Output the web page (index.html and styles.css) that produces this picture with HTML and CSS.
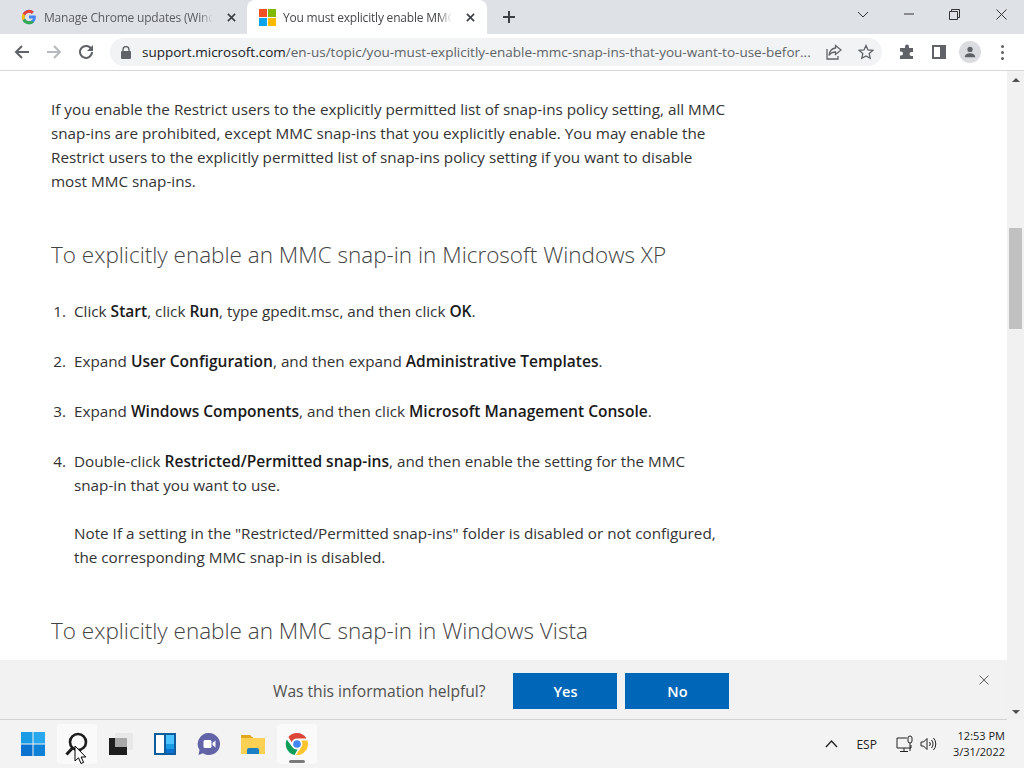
FILE: index.html
```html
<!DOCTYPE html>
<html lang="en">
<head>
  <meta charset="UTF-8">
  <title>You must explicitly enable MMC snap-ins</title>
  <link rel="stylesheet" href="styles.css">
</head>
<body>
  <div class="tabstrip">
    <div class="tab">
      <svg class="favicon" viewBox="0 0 16 16">
        <path d="M14.6 6.6H8v2.8h3.9c-.4 1.8-2 2.9-3.9 2.9a4.3 4.3 0 0 1 0-8.6c1 0 2 .4 2.8 1l2-2A7.2 7.2 0 0 0 8 .8a7.2 7.2 0 1 0 0 14.4c3.7 0 6.8-2.6 6.8-7.2 0-.5 0-.9-.2-1.4z" fill="#4285f4"/>
        <path d="M1.7 4.6 4 6.4A4.3 4.3 0 0 1 8 3.7c1 0 2 .4 2.8 1l2-2A7.2 7.2 0 0 0 1.7 4.6z" fill="#ea4335"/>
        <path d="M1.7 11.4A7.2 7.2 0 0 0 8 15.2c1.9 0 3.5-.6 4.8-1.8l-2.3-1.8c-.7.5-1.5.7-2.5.7a4.3 4.3 0 0 1-4-2.8z" fill="#34a853"/>
        <path d="M1.7 4.6a7.2 7.2 0 0 0 0 6.8L4 9.5a4.3 4.3 0 0 1 0-3.1z" fill="#fbbc05"/>
      </svg>
      <span class="tab-title">Manage Chrome updates (Windows)</span>
      <svg class="tab-close" viewBox="0 0 10 10"><path d="M1 1l8 8M9 1l-8 8"/></svg>
    </div>
    <div class="tab tab-active">
      <svg class="favicon favicon-ms" viewBox="0 0 17 17">
        <rect width="8" height="8" fill="#f25022"/>
        <rect x="9" width="8" height="8" fill="#7fba00"/>
        <rect y="9" width="8" height="8" fill="#00a4ef"/>
        <rect x="9" y="9" width="8" height="8" fill="#ffb900"/>
      </svg>
      <span class="tab-title">You must explicitly enable MMC snap-ins</span>
      <svg class="tab-close" viewBox="0 0 10 10"><path d="M1 1l8 8M9 1l-8 8"/></svg>
    </div>
    <svg class="new-tab" viewBox="0 0 12 12"><path d="M6 0v12M0 6h12"/></svg>
    <div class="window-controls">
      <svg class="win-btn win-chevron" viewBox="0 0 12 7"><path d="M1 1l5 5 5-5"/></svg>
      <svg class="win-btn win-min" viewBox="0 0 10 2"><path d="M0 1h10"/></svg>
      <svg class="win-btn win-max" viewBox="0 0 11 11"><path d="M.5 2.500h8v8h-8zM2.500 2.500v-2h8v8h-2"/></svg>
      <svg class="win-btn win-close" viewBox="0 0 11 11"><path d="M.5.5l10 10M10.500.5l-10 10"/></svg>
    </div>
  </div>

  <div class="toolbar">
    <svg class="tool" viewBox="0 0 16 16"><path d="M15 8H2M8 2 2 8l6 6"/></svg>
    <svg class="tool tool-off" viewBox="0 0 16 16"><path d="M1 8h13M8 2l6 6-6 6"/></svg>
    <svg class="tool" viewBox="0 0 16 16"><path d="M13.500 5.500A6 6 0 1 0 14 8"/><path class="solid" d="M15 1v6H9z"/></svg>
    <div class="omnibox">
      <svg class="lock" viewBox="0 0 10 13"><path d="M2 5.500V3.500a3 3 0 0 1 6 0v2" fill="none" stroke="#5f6368" stroke-width="1.400"/><rect y="5" width="10" height="8" rx="1" fill="#5f6368"/></svg>
      <span class="url"><span class="url-host">support.microsoft.com</span>/en-us/topic/you-must-explicitly-enable-mmc-snap-ins-that-you-want-to-use-befor...</span>
      <svg class="omni-icon omni-share" viewBox="0 0 16 16"><path d="M9.500 1.500 15 6l-5.500 4.500V8C6 8 4.500 9 3 11.500 3.500 7 6 4.500 9.500 4zM1 5v10h11v-3"/></svg>
      <svg class="omni-icon" viewBox="0 0 16 16"><path d="M8 1.500l2 4.400 4.800.5-3.600 3.200 1 4.700L8 11.900l-4.200 2.400 1-4.700L1.200 6.400 6 5.900z"/></svg>
    </div>
    <svg class="ext" viewBox="0 0 16 16"><path d="M6 2.500a2 2 0 0 1 4 0V4h4v4h-1.500a2 2 0 0 0 0 4H14v3H1v-3.500h1a2 2 0 0 0 0-4H1V4h5z" fill="#5f6368"/></svg>
    <svg class="ext panel" viewBox="0 0 14 14"><rect x="1" y="1" width="12" height="12" fill="none" stroke="#5f6368" stroke-width="2"/><rect x="8" y="1" width="5" height="12" fill="#5f6368"/></svg>
    <div class="avatar">
      <svg viewBox="0 0 16 16"><circle cx="8" cy="5" r="3" fill="#5f6368"/><path d="M2 14c0-3 3-4.500 6-4.500s6 1.500 6 4.500z" fill="#5f6368"/></svg>
    </div>
    <div class="kebab"><i></i><i></i><i></i></div>
  </div>

  <div class="viewport">
    <div class="page">
      <div class="article">
        <p>If you enable the Restrict users to the explicitly permitted list of snap-ins policy setting, all MMC snap-ins are prohibited, except MMC snap-ins that you explicitly enable. You may enable the Restrict users to the explicitly permitted list of snap-ins policy setting if you want to disable most MMC snap-ins.</p>
        <h2>To explicitly enable an MMC snap-in in Microsoft Windows XP</h2>
        <ol>
          <li>Click <b>Start</b>, click <b>Run</b>, type gpedit.msc, and then click <b>OK</b>.</li>
          <li>Expand <b>User Configuration</b>, and then expand <b>Administrative Templates</b>.</li>
          <li>Expand <b>Windows Components</b>, and then click <b>Microsoft Management Console</b>.</li>
          <li>Double-click <b>Restricted/Permitted snap-ins</b>, and then enable the setting for the MMC <span class="nowrap">snap-in</span> that you want to use.
            <p class="note">Note If a setting in the "Restricted/Permitted snap-ins" folder is disabled or not configured, the corresponding MMC snap-in is disabled.</p>
          </li>
        </ol>
        <h2>To explicitly enable an MMC snap-in in Windows Vista</h2>
      </div>
      <div class="feedback">
        <span class="feedback-label">Was this information helpful?</span>
        <button>Yes</button>
        <button>No</button>
        <svg class="feedback-close" viewBox="0 0 10 10"><path d="M.5.5l9 9M9.500.5l-9 9"/></svg>
      </div>
    </div>
    <div class="scrollbar">
      <span class="arrow arrow-up"></span>
      <div class="track"><div class="thumb"></div></div>
      <span class="arrow arrow-down"></span>
    </div>
  </div>

  <div class="taskbar">
    <div class="task-icons">
      <div class="task">
        <svg viewBox="0 0 24 24"><rect width="11.500" height="11.500" fill="#1a9be6"/><rect x="12.500" width="11.500" height="11.500" fill="#2aa8ee"/><rect y="12.500" width="11.500" height="11.500" fill="#0a73cf"/><rect x="12.500" y="12.500" width="11.500" height="11.500" fill="#0f82d8"/></svg>
      </div>
      <div class="task task-hover">
        <svg viewBox="0 0 24 24"><circle cx="13" cy="10" r="8" fill="none" stroke="#1c1c1c" stroke-width="2.600"/><path d="M7.500 16 1.500 22.500" stroke="#1c1c1c" stroke-width="3"/></svg>
      </div>
      <div class="task">
        <svg viewBox="0 0 24 24"><rect x="6" y="1" width="18" height="17" fill="#e8e8e8"/><rect y="6" width="18" height="17" fill="#1e1e1e"/><rect x="6" y="6" width="12" height="9" fill="#a8a8a8"/></svg>
      </div>
      <div class="task">
        <svg viewBox="0 0 24 24"><rect x="1" y="1" width="22" height="22" fill="#0f5c9e"/><rect x="3" y="3" width="8" height="18" fill="#fff"/><rect x="13" y="3" width="8" height="9" fill="#4cc2ff"/><rect x="13" y="12" width="8" height="5" fill="#1a9be6"/><rect x="13" y="17" width="8" height="4" fill="#0a73cf"/></svg>
      </div>
      <div class="task">
        <svg viewBox="0 0 24 24"><path d="M12 1a11 11 0 1 1-6 20.200L1.500 23l1-5A11 11 0 0 1 12 1z" fill="#6264a7"/><rect x="6.500" y="8" width="8" height="8" rx="1.500" fill="#fff"/><path d="M15.500 11l3-2.500v7l-3-2.500z" fill="#fff"/></svg>
      </div>
      <div class="task">
        <svg viewBox="0 0 24 24"><path d="M0 3h9l2 2h1v4H0z" fill="#e0a81c"/><rect y="6" width="24" height="16" fill="#fcd053"/><path d="M6 22v-4a2 2 0 0 1 2-2h8a2 2 0 0 1 2 2v4z" fill="#1b7fc4"/></svg>
      </div>
      <div class="task task-open">
        <svg viewBox="0 0 24 24">
          <path d="M12 1a11 11 0 0 1 9.500 5.500H12a5.500 5.500 0 0 0-5.200 3.700L3.400 5A11 11 0 0 1 12 1z" fill="#db4437"/>
          <path d="M1.800 7.500 7.200 15a5.500 5.500 0 0 0 5.400 2.500L9.500 23A11 11 0 0 1 1.800 7.500z" fill="#0f9d58"/>
          <path d="M22.400 8.500A11 11 0 0 1 11 23l4.700-7a5.500 5.500 0 0 0 .4-7.500z" fill="#fdc42d"/>
          <circle cx="12" cy="12" r="4.800" fill="#fff"/><circle cx="12" cy="12" r="3.800" fill="#4285f4"/>
        </svg>
        <span class="open-mark"></span>
      </div>
    </div>
    <svg class="cursor" viewBox="0 0 13 20"><path d="M1 1v15l3.500-3.200L7 18.500l2.600-1.100-2.500-5.400h4.700z" fill="#fff" stroke="#000" stroke-width="1"/></svg>
    <div class="tray">
      <svg class="tray-chevron" viewBox="0 0 13 8"><path d="M1 7l5.500-6L12 7"/></svg>
      <span class="tray-lang">ESP</span>
      <svg class="tray-net" viewBox="0 0 18 18"><path d="M11 3H1v10h14v-3M8 13v3M4 16.500h8"/><rect x="12" y="1" width="4" height="7" rx="2"/><path d="M14 8v8"/></svg>
      <svg class="tray-vol" viewBox="0 0 17 14"><path d="M1 5h2.500L7 1.500v11L3.500 9H1zM9.500 5a3 3 0 0 1 0 4M11.500 3a6 6 0 0 1 0 8M13.500 1a9 9 0 0 1 0 12"/></svg>
      <div class="clock"><span>12:53 PM</span><span>3/31/2022</span></div>
    </div>
  </div>
</body>
</html>
```

FILE: styles.css
```css
/* General */
html, body {
  height: 100%;
}

body {
  margin: 0;
  width: 1024px;
  height: 768px;
  overflow: hidden;
  display: flex;
  flex-direction: column;
  background: #fff;
  font-family: "Open Sans", sans-serif;
}

svg {
  display: block;
  flex: none;
}

/* Tab strip */
.tabstrip {
  height: 34px;
  flex: none;
  display: flex;
  align-items: flex-end;
  background: #dee1e6;
  padding-left: 8px;
}

.tab {
  width: 240px;
  height: 34px;
  box-sizing: border-box;
  display: flex;
  align-items: center;
  padding: 0 8px 0 13px;
  font-size: 12px;
  letter-spacing: -0.2px;
  color: #5a5c60;
}

.tab-active {
  margin-left: -1px;
  padding-left: 12px;
  background: #fff;
  border-radius: 8px 8px 0 0;
  color: #45474a;
}

.favicon {
  width: 16px;
  height: 16px;
  margin-right: 7px;
}

.favicon-ms {
  width: 17px;
  height: 17px;
}

.tab-title {
  flex: 1;
  min-width: 0;
  white-space: nowrap;
  overflow: hidden;
  -webkit-mask-image: linear-gradient(to right, #000 calc(100% - 14px), transparent);
  mask-image: linear-gradient(to right, #000 calc(100% - 14px), transparent);
}

.tab-close {
  width: 9px;
  height: 9px;
  margin: 0 4px 0 14px;
  fill: none;
  stroke: #3c4043;
  stroke-width: 1.800;
}

.new-tab {
  width: 12px;
  height: 12px;
  margin: 0 0 11px 16px;
  fill: none;
  stroke: #3c4043;
  stroke-width: 2;
}

.window-controls {
  margin-left: auto;
  height: 28px;
  align-self: flex-start;
  display: flex;
  align-items: center;
  padding-right: 17px;
}

.win-btn {
  fill: none;
  stroke: #333;
  stroke-width: 1;
}

.win-chevron {
  width: 12px;
  height: 7px;
  margin-right: 35px;
}

.win-min {
  width: 10px;
  height: 2px;
  margin-right: 35px;
}

.win-max {
  width: 11px;
  height: 11px;
  margin-right: 36px;
}

.win-close {
  width: 11px;
  height: 11px;
}

/* Toolbar */
.toolbar {
  height: 37px;
  flex: none;
  box-sizing: border-box;
  display: flex;
  align-items: center;
  padding: 0 0 0 14px;
  background: #fff;
  border-bottom: 1px solid #d5d7da;
}

.tool {
  width: 16px;
  height: 16px;
  margin-right: 16px;
  fill: none;
  stroke: #5f6368;
  stroke-width: 2;
}

.tool-off {
  stroke: #b6b9bd;
}

.tool .solid {
  fill: #5f6368;
  stroke: none;
}

.omnibox {
  width: 772px;
  height: 28px;
  box-sizing: border-box;
  display: flex;
  align-items: center;
  padding: 0 8px 0 11px;
  border-radius: 14px;
  background: #f1f3f4;
}

.lock {
  width: 10px;
  height: 13px;
  margin-right: 11px;
}

.url {
  flex: 1;
  min-width: 0;
  white-space: nowrap;
  overflow: hidden;
  font-size: 13.500px;
  color: #5f6368;
}

.url-host {
  color: #202124;
}

.omni-icon {
  width: 16px;
  height: 16px;
  margin-left: 16px;
  fill: none;
  stroke: #5f6368;
  stroke-width: 1.300;
}

.omni-share {
  margin-left: 15px;
}

.ext {
  width: 16px;
  height: 16px;
  margin-left: 17px;
}

.panel {
  width: 14px;
  height: 14px;
  margin-left: 17px;
}

.avatar {
  width: 22px;
  height: 22px;
  margin-left: 13px;
  display: flex;
  align-items: center;
  justify-content: center;
  border-radius: 50%;
  background: #dadce0;
}

.avatar svg {
  width: 14px;
  height: 14px;
}

.kebab {
  margin-left: 20px;
  display: flex;
  flex-direction: column;
  gap: 3px;
}

.kebab i {
  width: 3px;
  height: 3px;
  border-radius: 50%;
  background: #5f6368;
}

/* Page area */
.viewport {
  flex: 1;
  min-height: 0;
  display: flex;
}

.page {
  flex: 1;
  min-width: 0;
  display: flex;
  flex-direction: column;
}

.article {
  flex: 1;
  min-height: 0;
  overflow: hidden;
  box-sizing: border-box;
  padding: 26px 0 0 51px;
  width: 728px;
  font-size: 15.250px;
  line-height: 24px;
  color: #333;
}

.article p {
  margin: 0;
}

h2 {
  margin: 45px 0 0;
  font-size: 22.500px;
  line-height: 34px;
  font-weight: 300;
  color: #444;
}

ol {
  margin: 27px 0 0;
  padding: 0 0 0 23px;
}

li {
  margin-bottom: 26px;
}

li::marker {
  content: counter(list-item) ".  ";
}

li b {
  font-size: 15.550px;
  font-weight: 600;
  color: #1a1a1a;
}

.nowrap {
  white-space: nowrap;
}

.article .note {
  margin-top: 24px;
}

/* Feedback bar */
.feedback {
  height: 60px;
  flex: none;
  box-sizing: border-box;
  display: flex;
  align-items: center;
  padding: 3px 0 0 273px;
  background: #f2f2f2;
  border-bottom: 1px solid #d2d2d2;
  position: relative;
}

.feedback-label {
  font-size: 15.600px;
  color: #505050;
  margin-right: 28px;
}

.feedback button {
  width: 104px;
  height: 36px;
  margin-right: 8px;
  border: none;
  background: #0067b8;
  color: #fff;
  font: 600 14.500px "Open Sans", sans-serif;
}

.feedback-close {
  position: absolute;
  left: 979px;
  top: 15px;
  width: 10px;
  height: 10px;
  fill: none;
  stroke: #5e5e5e;
  stroke-width: 1;
}

/* Scrollbar */
.scrollbar {
  width: 17px;
  flex: none;
  display: flex;
  flex-direction: column;
  background: #f1f1f1;
}

.track {
  flex: 1;
  padding: 140px 2px 0;
}

.thumb {
  height: 101px;
  background: #c1c1c1;
}

.arrow {
  height: 17px;
  flex: none;
  display: flex;
  justify-content: center;
  align-items: center;
}

.arrow::before {
  content: "";
  border-left: 4px solid transparent;
  border-right: 4px solid transparent;
}

.arrow-up::before {
  border-bottom: 4px solid #505050;
}

.arrow-down::before {
  border-top: 4px solid #505050;
}

/* Taskbar */
.taskbar {
  height: 48px;
  flex: none;
  display: flex;
  align-items: center;
  background: #f3f3f3;
  position: relative;
}

.task-icons {
  display: flex;
  gap: 4px;
  padding-left: 13px;
}

.task {
  width: 40px;
  height: 40px;
  display: flex;
  align-items: center;
  justify-content: center;
  position: relative;
  border-radius: 4px;
}

.task svg {
  width: 24px;
  height: 24px;
}

.task-hover, .task-open {
  background: #fafafa;
}

.open-mark {
  position: absolute;
  left: 12px;
  bottom: 1px;
  width: 16px;
  height: 3px;
  border-radius: 2px;
  background: #7a7a7a;
}

.cursor {
  position: absolute;
  left: 74px;
  top: 25px;
  width: 13px;
  height: 20px;
}

.tray {
  margin-left: auto;
  display: flex;
  align-items: center;
  padding-right: 19px;
  color: #222;
}

.tray-chevron {
  width: 13px;
  height: 8px;
  fill: none;
  stroke: #222;
  stroke-width: 1.300;
}

.tray-lang {
  font-size: 12px;
  margin: 0 19px 0 18px;
}

.tray-net {
  width: 18px;
  height: 18px;
  fill: none;
  stroke: #222;
  stroke-width: 1;
  margin-right: 6px;
}

.tray-vol {
  width: 17px;
  height: 14px;
  fill: none;
  stroke: #222;
  stroke-width: 1;
}

.clock {
  margin-left: 16px;
  display: flex;
  flex-direction: column;
  align-items: flex-end;
  font-size: 11px;
  line-height: 16px;
}
```
